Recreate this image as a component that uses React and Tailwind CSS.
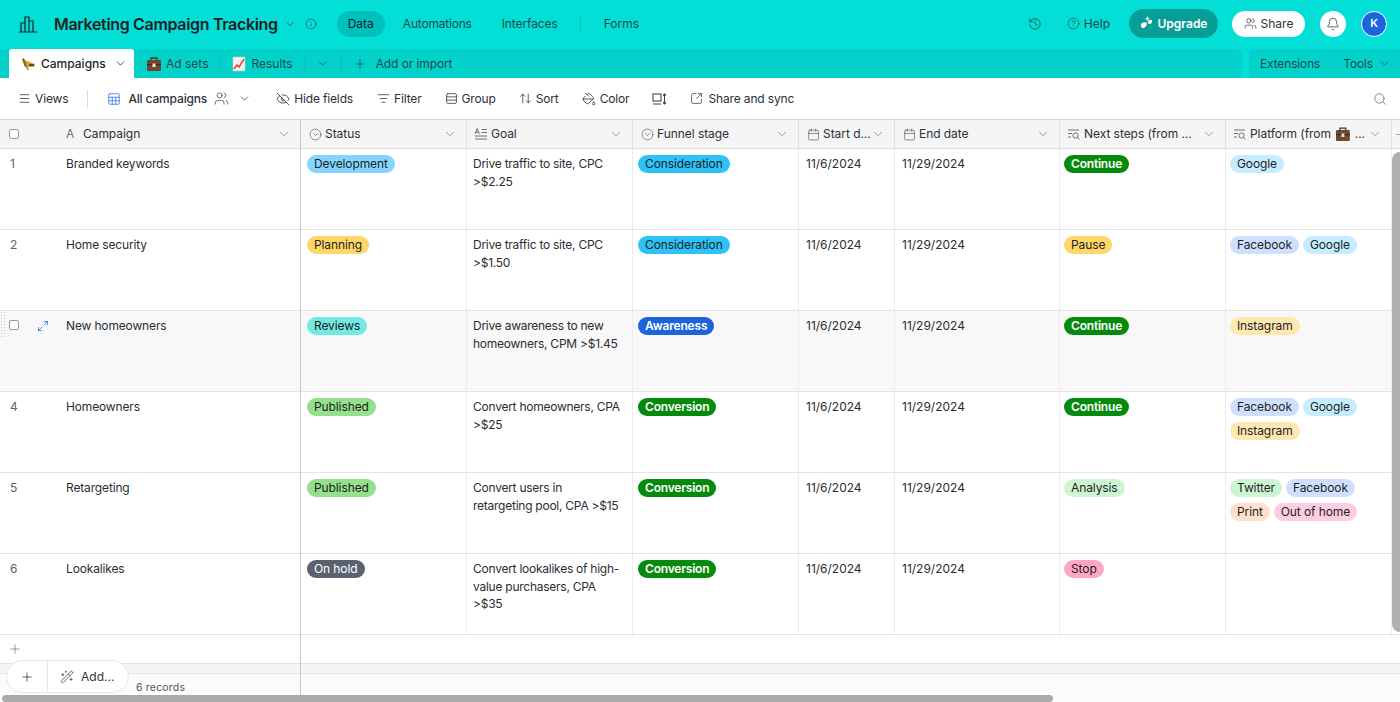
import {
  Bell, Calendar, ChevronDown, CircleChevronDown, CircleHelp, EyeOff, History, Info, ListFilter,
  Maximize2, Menu, PaintBucket, Plus, Rows3, Search, Sheet, SquareArrowOutUpRight, ArrowUpDown, Users, WandSparkles,
} from 'lucide-react';

const BLUE = 'bg-[#1b64dc] text-white font-semibold tracking-[-0.2px]';
const GREEN = 'bg-[#068a0e] text-white font-semibold tracking-[-0.2px]';

const PILLS = {
  Development: 'bg-[#82d6ff]',
  Planning: 'bg-[#ffd766]',
  Reviews: 'bg-[#72e9e2]',
  Published: 'bg-[#95e08a]',
  'On hold': 'bg-[#5a6270] text-white',
  Consideration: 'bg-[#2ec3f8]',
  Awareness: BLUE,
  Conversion: GREEN,
  Continue: GREEN,
  Pause: 'bg-[#ffd766]',
  Analysis: 'bg-[#cef5d2]',
  Stop: 'bg-[#ffa6c4]',
  Google: 'bg-[#c6ecff]',
  Facebook: 'bg-[#cfe0ff]',
  Instagram: 'bg-[#ffe8b0]',
  Twitter: 'bg-[#cef5d2]',
  Print: 'bg-[#ffe0cc]',
  'Out of home': 'bg-[#ffcce0]',
};

const rows = [
  { id: 1, name: 'Branded keywords', status: 'Development', goal: 'Drive traffic to site, CPC >$2.25', funnel: 'Consideration', next: 'Continue', platform: ['Google'] },
  { id: 2, name: 'Home security', status: 'Planning', goal: 'Drive traffic to site, CPC >$1.50', funnel: 'Consideration', next: 'Pause', platform: ['Facebook', 'Google'] },
  { id: 3, name: 'New homeowners', status: 'Reviews', goal: 'Drive awareness to new homeowners, CPM >$1.45', funnel: 'Awareness', next: 'Continue', platform: ['Instagram'], hover: true },
  { id: 4, name: 'Homeowners', status: 'Published', goal: 'Convert homeowners, CPA >$25', funnel: 'Conversion', next: 'Continue', platform: ['Facebook', 'Google', 'Instagram'] },
  { id: 5, name: 'Retargeting', status: 'Published', goal: 'Convert users in retargeting pool, CPA >$15', funnel: 'Conversion', next: 'Analysis', platform: ['Twitter', 'Facebook', 'Print', 'Out of home'] },
  { id: 6, name: 'Lookalikes', status: 'On hold', goal: 'Convert lookalikes of high-value purchasers, CPA >$35', funnel: 'Conversion', next: 'Stop', platform: [] },
];

const Pill = ({ label }) => (
  <span className={`inline-block h-[18px] rounded-full px-[7px] text-[12px] leading-[18px] tracking-[-0.1px] whitespace-nowrap text-[#1d1f25] ${PILLS[label]}`}>
    {label}
  </span>
);

const Logo = () => (
  <svg width="20" height="20" viewBox="0 0 20 20" fill="none" stroke="#1d1f25" strokeWidth="1.2">
    <path d="M1 18h18M3 18V9h4v9M7 18V3h4v15M11 18V7h4v11" />
  </svg>
);

const Megaphone = () => (
  <svg width="16" height="16" viewBox="0 0 16 16">
    <path d="M1 3l13 5-1 3-9 0z" fill="#d9a43a" />
    <path d="M1 3l3 8 2 0-3-9z" fill="#8a6420" />
    <rect x="8" y="8" width="5" height="2" fill="#5a4a30" />
    <path d="M5 11l1 3 2 0-1-3z" fill="#c48d2e" />
  </svg>
);

const Briefcase = ({ size = 16 }) => (
  <svg width={size} height={size} viewBox="0 0 16 16">
    <path d="M5 4V2h6v2" fill="none" stroke="#4a3222" strokeWidth="1.3" />
    <rect x="1" y="4" width="14" height="11" rx="1" fill="#6b4a33" />
    <rect x="1" y="8" width="14" height="1.2" fill="#3d2a1c" />
    <rect x="6.5" y="7.5" width="3" height="3.5" fill="#e8e0d0" />
  </svg>
);

const ChartEmoji = () => (
  <svg width="16" height="16" viewBox="0 0 16 16">
    <rect x="2" y="1" width="12" height="14" fill="#f3f1ee" stroke="#cfcac4" strokeWidth="0.5" />
    <path d="M3 13l3-4 2 2 5-8" fill="none" stroke="#e2433a" strokeWidth="1.5" />
  </svg>
);

const LookupIcon = () => (
  <svg width="14" height="14" viewBox="0 0 14 14" fill="none" stroke="#6b6f76" strokeWidth="1" className="shrink-0">
    <path d="M1 3h11M1 6.5h4M1 10h3" />
    <circle cx="8.5" cy="8.5" r="2.6" />
    <path d="M10.5 10.5l2 2" />
  </svg>
);

const TextIcon = () => (
  <svg width="14" height="14" viewBox="0 0 14 14" fill="none" stroke="#6b6f76" strokeWidth="1" className="shrink-0">
    <path d="M1 7l2.2-5.500L5.400 7M1.800 5.200h2.800M7.500 2.500H13M7.500 5.500H13M1 9h12M1 12h12" />
  </svg>
);

const RowHeightIcon = () => (
  <svg width="15" height="14" viewBox="0 0 15 14" fill="none" stroke="#41454d" strokeWidth="1.1">
    <rect x="1" y="2" width="8" height="7" />
    <path d="M1 12h8M12.500 2v10M11 3.500l1.500-1.500L14 3.500M11 10.500l1.500 1.500 1.500-1.500" />
  </svg>
);

const Upgrade = () => (
  <svg width="15" height="15" viewBox="0 0 15 15" fill="white">
    <path d="M1 8.500c1-2.500 4-3 6-1.500-.5 2.500-1.500 5-4 5C1.500 12 .5 10 1 8.500z" />
    <path d="M8 6.500C8 4.500 10 3.500 12 4.500c.5 2-1 4-3 3.500z" />
    <path d="M7.500 0l.8 2 1.700.700-1.700.700-.8 2-.8-2L5 2.700l1.700-.700z" />
  </svg>
);

const TOOLS = [
  { icon: <EyeOff size={14} strokeWidth={1.4} />, label: 'Hide fields', margin: 'ml-[25px]' },
  { icon: <ListFilter size={13} strokeWidth={1.4} />, label: 'Filter', margin: 'ml-[24px]' },
  { icon: <Rows3 size={13} strokeWidth={1.4} />, label: 'Group', margin: 'ml-[23px]' },
  { icon: <ArrowUpDown size={13} strokeWidth={1.4} />, label: 'Sort', margin: 'ml-[23px]' },
  { icon: <PaintBucket size={14} strokeWidth={1.4} />, label: 'Color', margin: 'ml-[23px]' },
];

const HeaderCell = ({ icon, label, className }) => (
  <div className={`flex h-full shrink-0 items-center gap-[3px] border-r border-[#e1e1e1] pl-[7px] pr-[9px] ${className}`}>
    <span className="flex w-[14px] shrink-0 items-center justify-center">{icon}</span>
    <span className="min-w-0 flex-1 text-[12px] tracking-[-0.05px] whitespace-nowrap text-[#2d2f36]">{label}</span>
    <ChevronDown size={14} strokeWidth={1.2} className="shrink-0 text-[#777]" />
  </div>
);

const Cell = ({ className, children }) => (
  <div className={`h-full shrink-0 border-r border-[#ececec] px-[6px] pt-[6px] text-[12px] leading-[17.5px] text-[#2b2d33] ${className}`}>
    {children}
  </div>
);

const COL = {
  status: 'w-[166px]',
  goal: 'w-[166px]',
  funnel: 'w-[166px]',
  start: 'w-[96px]',
  end: 'w-[165px]',
  next: 'w-[166px]',
  platform: 'w-[166px]',
};

const App = () => (
  <div className="relative flex h-[702px] w-[1400px] flex-col overflow-hidden bg-white font-['Inter',sans-serif] text-[#1d1f25]">
    {/* Top bar */}
    <div className="flex h-[49px] shrink-0 items-center bg-[#03ded6] pb-[2px] pl-[18px] pr-[13px]">
      <Logo />
      <span className="ml-[16px] text-[16px] font-semibold tracking-[-0.33px]">Marketing Campaign Tracking</span>
      <ChevronDown size={12} strokeWidth={1.5} className="ml-[6px] text-[#24403f]" />
      <Info size={12} strokeWidth={1.2} className="ml-[9px] text-[#24403f]" />
      <span className="ml-[20px] rounded-full bg-[#02c1ba] px-[11px] py-[4px] text-[12px] text-[#123]">Data</span>
      <span className="ml-[18px] text-[12px] tracking-[-0.2px] text-[#1f4a4a]">Automations</span>
      <span className="ml-[30px] text-[12px] tracking-[-0.1px] text-[#1f4a4a]">Interfaces</span>
      <span className="ml-[22px] h-[18px] w-px bg-[#02c7c0]" />
      <span className="ml-[23px] text-[12px] text-[#1f4a4a]">Forms</span>
      <History size={14} strokeWidth={1.3} className="ml-auto text-[#24403f]" />
      <CircleHelp size={13} strokeWidth={1.2} className="ml-[25px] text-[#24403f]" />
      <span className="ml-[4px] text-[12px] text-[#1f4a4a]">Help</span>
      <span className="ml-[19px] flex h-[29px] w-[89px] items-center justify-center gap-[3px] rounded-full bg-[#079e98] text-[12px] font-semibold text-white">
        <Upgrade />
        Upgrade
      </span>
      <span className="ml-[14px] flex h-[26px] w-[73px] items-center justify-center gap-[4px] rounded-full bg-white text-[12px] text-[#333]">
        <Users size={13} strokeWidth={1.3} />
        Share
      </span>
      <span className="ml-[15px] flex h-[26px] w-[26px] items-center justify-center rounded-full bg-white">
        <Bell size={14} strokeWidth={1.2} />
      </span>
      <span className="ml-[15px] flex h-[26px] w-[26px] items-center justify-center rounded-full border border-white bg-[#1b64dc] text-[11px] font-semibold text-white">K</span>
    </div>

    {/* Tabs */}
    <div className="flex h-[29px] shrink-0 bg-[#03ded6] text-[12px]">
      <div className="flex w-[1242px] items-center rounded-tr-[4px] bg-[#03d2ca]">
        <div className="ml-[9px] flex h-[29px] w-[125px] items-center gap-[4px] rounded-t-[3px] bg-white pl-[12px] font-medium whitespace-nowrap">
          <span className="shrink-0"><Megaphone /></span>
          <span>Campaigns</span>
          <ChevronDown size={13} strokeWidth={1.4} className="ml-[4px] shrink-0" />
        </div>
        <div className="ml-[12px] flex items-center gap-[4px] text-[#1f4a4a]">
          <Briefcase />Ad sets
        </div>
        <span className="ml-[12px] h-[12px] w-px bg-[#02bdb6]" />
        <div className="ml-[10px] flex items-center gap-[4px] text-[#1f4a4a]">
          <ChartEmoji />Results
        </div>
        <span className="ml-[12px] h-[12px] w-px bg-[#02bdb6]" />
        <ChevronDown size={13} strokeWidth={1.4} className="ml-[10px] text-[#1f4a4a]" />
        <span className="ml-[12px] h-[12px] w-px bg-[#02bdb6]" />
        <Plus size={14} strokeWidth={1.3} className="ml-[11px] text-[#1f4a4a]" />
        <span className="ml-[9px] tracking-[-0.1px] text-[#1f4a4a]">Add or import</span>
      </div>
      <div className="ml-[7px] flex flex-1 items-center rounded-tl-[4px] bg-[#03d2ca] pl-[11px] tracking-[-0.15px] text-[#1f4a4a]">
        <span>Extensions</span>
        <span className="ml-[23px]">Tools</span>
        <ChevronDown size={13} strokeWidth={1.4} className="ml-[5px]" />
      </div>
    </div>

    {/* Toolbar */}
    <div className="flex h-[42px] shrink-0 items-center border-b border-[#d5d5d5] pl-[18px] pr-[13px] text-[12px] tracking-[-0.15px] text-[#2d2f36]">
      <Menu size={13} strokeWidth={1.4} />
      <span className="ml-[4px]">Views</span>
      <span className="ml-[19px] h-[18px] w-px bg-[#dcdcdc]" />
      <Sheet size={14} strokeWidth={1.3} className="ml-[19px] text-[#2b6fe0]" />
      <span className="ml-[7px] font-medium">All campaigns</span>
      <Users size={15} strokeWidth={1.1} className="ml-[7px]" />
      <ChevronDown size={13} strokeWidth={1.3} className="ml-[9px]" />
      {TOOLS.map((t) => (
        <div key={t.label} className={`flex items-center gap-[4px] ${t.margin}`}>
          {t.icon}
          <span>{t.label}</span>
        </div>
      ))}
      <span className="ml-[23px]"><RowHeightIcon /></span>
      <SquareArrowOutUpRight size={13} strokeWidth={1.3} className="ml-[23px]" />
      <span className="ml-[5px]">Share and sync</span>
      <Search size={14} strokeWidth={1.2} className="ml-auto text-[#555]" />
    </div>

    {/* Grid */}
    <div className="flex min-h-0 flex-1">
      {/* Frozen pane */}
      <div className="flex w-[301px] shrink-0 flex-col border-r border-[#c8c8c8]">
        <div className="flex h-[29px] shrink-0 items-center border-b border-[#dcdcdc] bg-[#f5f5f5] px-[9px]">
          <span className="h-[10px] w-[10px] rounded-[2px] border border-[#999] bg-white" />
          <span className="ml-[47px] w-[14px] text-[12px] text-[#6b6f76]">A</span>
          <span className="ml-[3px] flex-1 text-[12px] tracking-[-0.05px] text-[#2d2f36]">Campaign</span>
          <ChevronDown size={14} strokeWidth={1.2} className="text-[#777]" />
        </div>
        {rows.map((r) => (
          <div key={r.id} className={`relative flex h-[81px] shrink-0 border-b border-[#e4e4e4] pt-[6px] text-[12px] leading-[17.5px] tracking-[-0.15px] text-[#2b2d33] ${r.hover ? 'bg-[#f8f8f8]' : ''}`}>
            {r.hover ? (
              <>
                <span className="absolute top-0 left-0 h-[27px] w-[6px] bg-[radial-gradient(#c4c4c4_1px,transparent_1px)] bg-[size:3px_3px]" />
                <span className="mt-[3px] ml-[9px] h-[10px] w-[10px] rounded-[2px] border border-[#999] bg-white" />
                <Maximize2 size={12} strokeWidth={1.5} className="mt-[3px] ml-[18px] text-[#2b6fe0]" />
              </>
            ) : (
              <span className="ml-[10px] w-[39px] text-[#5e6168]">{r.id}</span>
            )}
            <span className="ml-[17px]">{r.name}</span>
          </div>
        ))}
        <div className="flex h-[29px] shrink-0 items-center border-b border-[#e4e4e4] pl-[8px]">
          <Plus size={14} strokeWidth={1.1} className="text-[#666]" />
        </div>
        <div className="h-[10px] shrink-0 border-b border-[#e4e4e4] bg-[#f5f5f5]" />
        <div className="flex-1 bg-[#fbfbfb] pt-[6px] pl-[136px] text-[10.5px] tracking-[0.2px] text-[#555]">6 records</div>
      </div>

      {/* Scrolling pane */}
      <div className="flex min-w-0 flex-1 flex-col">
        <div className="flex h-[29px] shrink-0 border-b border-[#dcdcdc] bg-[#f5f5f5]">
          <HeaderCell className={COL.status} icon={<CircleChevronDown size={13} strokeWidth={1.2} className="text-[#555]" />} label="Status" />
          <HeaderCell className={COL.goal} icon={<TextIcon />} label="Goal" />
          <HeaderCell className={COL.funnel} icon={<CircleChevronDown size={13} strokeWidth={1.2} className="text-[#555]" />} label="Funnel stage" />
          <HeaderCell className={COL.start} icon={<Calendar size={13} strokeWidth={1.2} className="text-[#555]" />} label="Start d..." />
          <HeaderCell className={COL.end} icon={<Calendar size={13} strokeWidth={1.2} className="text-[#555]" />} label="End date" />
          <HeaderCell className={COL.next} icon={<LookupIcon />} label="Next steps (from ..." />
          <HeaderCell
            className={COL.platform}
            icon={<LookupIcon />}
            label={<span className="flex items-center gap-[4px]">Platform (from <Briefcase size={16} /> ...</span>}
          />
          <div className="flex flex-1 items-center pl-[2px]">
            <Plus size={13} strokeWidth={1.1} className="text-[#777]" />
          </div>
        </div>
        {rows.map((r) => (
          <div key={r.id} className={`flex h-[81px] shrink-0 border-b border-[#e4e4e4] ${r.hover ? 'bg-[#f8f8f8]' : ''}`}>
            <Cell className={COL.status}><Pill label={r.status} /></Cell>
            <Cell className={`${COL.goal} pr-[10px] tracking-[-0.25px]`}>{r.goal}</Cell>
            <Cell className={`${COL.funnel} pl-[5px]`}><Pill label={r.funnel} /></Cell>
            <Cell className={`${COL.start} pl-[7px]`}>11/6/2024</Cell>
            <Cell className={`${COL.end} pl-[7px]`}>11/29/2024</Cell>
            <Cell className={`${COL.next} pl-[4px]`}><Pill label={r.next} /></Cell>
            <Cell className={`${COL.platform} flex flex-wrap content-start gap-x-[4px] gap-y-[6px] pl-[4px]`}>
              {r.platform.map((p) => <Pill key={p} label={p} />)}
            </Cell>
          </div>
        ))}
        <div className="h-[29px] shrink-0 border-b border-[#e4e4e4]" />
        <div className="h-[10px] shrink-0 border-b border-[#e4e4e4] bg-[#f5f5f5]" />
        <div className="flex-1 bg-[#fbfbfb]" />
      </div>
    </div>

    {/* Floating add button */}
    <div className="absolute top-[660px] left-[6px] flex h-[33px] w-[123px] items-center rounded-full border border-[#e6e6e6] bg-white text-[12px] text-[#333]">
      <span className="flex h-full w-[41px] items-center justify-center border-r border-[#e6e6e6]">
        <Plus size={14} strokeWidth={1.3} />
      </span>
      <WandSparkles size={14} strokeWidth={1.2} className="ml-[12px]" />
      <span className="ml-[7px]">Add...</span>
    </div>

    {/* Scrollbars */}
    <div className="absolute top-[152px] right-0 h-[480px] w-[8px] rounded-l-full bg-[#b0b0b0]" />
    <div className="absolute bottom-0 left-[2px] h-[7px] w-[1051px] rounded-full bg-[#aaaaaa]" />
  </div>
);

export default App;
